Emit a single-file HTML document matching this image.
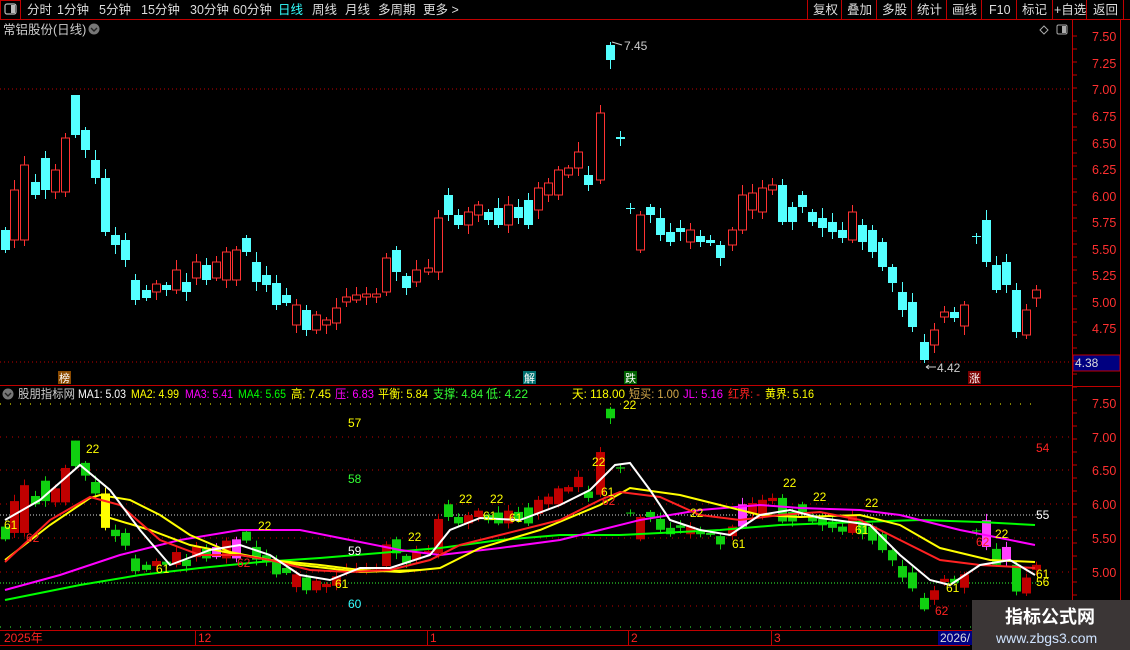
<!DOCTYPE html>
<html><head><meta charset="utf-8">
<style>
body{margin:0;background:#000;width:1130px;height:650px;overflow:hidden;font-family:"Liberation Sans","Noto Sans CJK SC",sans-serif}
svg{position:absolute;left:0;top:0}
</style></head><body>
<svg id="s" width="1130" height="650" xmlns="http://www.w3.org/2000/svg" font-family="Liberation Sans, Noto Sans CJK SC, sans-serif">
<rect x="0" y="0" width="1130" height="19" fill="#000"/>
<line x1="0" y1="19.5" x2="1130" y2="19.5" stroke="#c00000"/>
<rect x="0.5" y="0.5" width="20" height="19" fill="none" stroke="#c00000"/>
<rect x="5" y="4" width="11" height="10" rx="2" fill="none" stroke="#bbb" stroke-width="1.2"/>
<rect x="11" y="5" width="4" height="8" fill="#bbb"/>
<g font-size="12.5" fill="#ddd">
<text x="27" y="14">分时</text><text x="57" y="14">1分钟</text><text x="99" y="14">5分钟</text><text x="141" y="14">15分钟</text><text x="190" y="14">30分钟</text><text x="233" y="14">60分钟</text>
<text x="278" y="14" fill="#3ff">日线</text><text x="312" y="14">周线</text><text x="345" y="14">月线</text><text x="378" y="14">多周期</text><text x="423" y="14">更多 &gt;</text>
<text x="813" y="14">复权</text><text x="847" y="14">叠加</text><text x="882" y="14">多股</text><text x="917" y="14">统计</text><text x="952" y="14">画线</text><text x="989" y="14">F10</text><text x="1022" y="14">标记</text><text x="1054" y="14">+自选</text><text x="1093" y="14">返回</text>
</g>
<g stroke="#c00000"><line x1="807.5" y1="0" x2="807.5" y2="19"/><line x1="841.5" y1="0" x2="841.5" y2="19"/><line x1="876.5" y1="0" x2="876.5" y2="19"/><line x1="911.5" y1="0" x2="911.5" y2="19"/><line x1="946.5" y1="0" x2="946.5" y2="19"/><line x1="981.5" y1="0" x2="981.5" y2="19"/><line x1="1016.5" y1="0" x2="1016.5" y2="19"/><line x1="1052.5" y1="0" x2="1052.5" y2="19"/><line x1="1086.5" y1="0" x2="1086.5" y2="19"/><line x1="1123.5" y1="0" x2="1123.5" y2="19"/></g>
<text x="3" y="34" font-size="12.5" fill="#ccc">常铝股份(日线)</text>
<circle cx="94" cy="29" r="5.5" fill="#777"/><path d="M91 28l3 3 3-3" stroke="#222" stroke-width="1.4" fill="none"/>
<path d="M1044 26l4 4-4 4-4-4z" fill="none" stroke="#aaa"/>
<rect x="1057" y="25" width="10" height="9" rx="1.5" fill="none" stroke="#aaa"/><rect x="1062" y="26" width="4" height="7" fill="#aaa"/>
<line x1="1072.5" y1="19" x2="1072.5" y2="630" stroke="#c00000"/>
<line x1="1120.5" y1="19" x2="1120.5" y2="650" stroke="#c00000"/>
<line x1="0" y1="385.5" x2="1072" y2="385.5" stroke="#c00000"/>
<line x1="1072" y1="386.5" x2="1120" y2="386.5" stroke="#c00000"/>
<line x1="0" y1="630.5" x2="1120" y2="630.5" stroke="#c00000"/>
<line x1="0" y1="645.5" x2="970" y2="645.5" stroke="#c00000"/>
<g font-size="12.5" fill="#ff3030">
<text x="1092" y="41">7.50</text><text x="1092" y="68">7.25</text><text x="1092" y="94">7.00</text><text x="1092" y="121">6.75</text><text x="1092" y="148">6.50</text><text x="1092" y="174">6.25</text><text x="1092" y="201">6.00</text><text x="1092" y="227">5.75</text><text x="1092" y="254">5.50</text><text x="1092" y="280">5.25</text><text x="1092" y="307">5.00</text><text x="1092" y="333">4.75</text>
<text x="1092" y="408">7.50</text><text x="1092" y="442">7.00</text><text x="1092" y="475">6.50</text><text x="1092" y="509">6.00</text><text x="1092" y="543">5.50</text><text x="1092" y="577">5.00</text>
</g>
<rect x="1073" y="355" width="47" height="16" fill="#000080" stroke="#c00000"/>
<text x="1075" y="367" font-size="12" fill="#ddd">4.38</text>
<g id="ticks" stroke="#c00000"></g>
<line x1="0" y1="89" x2="1072" y2="89" stroke="#c00000" stroke-dasharray="1 3"/>
<line x1="0" y1="362" x2="1072" y2="362" stroke="#c00000" stroke-dasharray="1 3"/>
<g stroke="#c00000" stroke-dasharray="1 5">
<line x1="0" y1="437" x2="1072" y2="437"/><line x1="0" y1="470" x2="1072" y2="470"/><line x1="0" y1="504" x2="1072" y2="504"/><line x1="0" y1="538" x2="1072" y2="538"/><line x1="0" y1="572" x2="1072" y2="572"/><line x1="0" y1="606" x2="1072" y2="606"/>
</g>
<line x1="0" y1="404" x2="1040" y2="404" stroke="#ff0" stroke-dasharray="1 9"/>
<line x1="0" y1="515" x2="1040" y2="515" stroke="#ddd" stroke-dasharray="1 2"/>
<line x1="0" y1="583" x2="1040" y2="583" stroke="#3f3" stroke-dasharray="1 2"/>
<line x1="0" y1="627" x2="1040" y2="627" stroke="#3f3" stroke-dasharray="1 9"/>
<circle cx="8" cy="394" r="5.5" fill="#777"/><path d="M5 393l3 3 3-3" stroke="#222" stroke-width="1.4" fill="none"/>
<g font-size="12">
<text x="18" y="398" fill="#ccc" textLength="57" lengthAdjust="spacingAndGlyphs">股朋指标网</text>
<text x="78" y="398" fill="#fff" textLength="48" lengthAdjust="spacingAndGlyphs">MA1: 5.03</text>
<text x="131" y="398" fill="#ff0" textLength="48" lengthAdjust="spacingAndGlyphs">MA2: 4.99</text>
<text x="185" y="398" fill="#f0f" textLength="48" lengthAdjust="spacingAndGlyphs">MA3: 5.41</text>
<text x="238" y="398" fill="#0f0" textLength="48" lengthAdjust="spacingAndGlyphs">MA4: 5.65</text>
<text x="291" y="398" fill="#ff0" textLength="40" lengthAdjust="spacingAndGlyphs">高: 7.45</text>
<text x="335" y="398" fill="#f0f" textLength="39" lengthAdjust="spacingAndGlyphs">压: 6.83</text>
<text x="378" y="398" fill="#ff0" textLength="50" lengthAdjust="spacingAndGlyphs">平衡: 5.84</text>
<text x="433" y="398" fill="#3f3" textLength="50" lengthAdjust="spacingAndGlyphs">支撑: 4.84</text>
<text x="486" y="398" fill="#3f3">低: 4.22</text>
<text x="572" y="398" fill="#ff0" textLength="53" lengthAdjust="spacingAndGlyphs">天: 118.00</text>
<text x="629" y="398" fill="#d4a84a" textLength="50" lengthAdjust="spacingAndGlyphs">短买: 1.00</text>
<text x="683" y="398" fill="#f0f" textLength="40" lengthAdjust="spacingAndGlyphs">JL: 5.16</text>
<text x="728" y="398" fill="#f22" textLength="32" lengthAdjust="spacingAndGlyphs">红界: -</text>
<text x="765" y="398" fill="#ff0" textLength="49" lengthAdjust="spacingAndGlyphs">黄界: 5.16</text>
</g>
<g id="c"></g>
<g fill="none" stroke-width="2">
<polyline stroke="#0f0" points="5,600 80,585 140,575 200,568 260,562 320,558 380,553 440,548 500,540 560,535 620,535 660,533 720,530 780,525 860,522 920,520 980,522 1035,525"/>
<polyline stroke="#f0f" points="5,590 60,575 120,555 180,540 240,530 300,530 350,540 400,550 440,555 500,548 560,540 600,530 640,520 700,510 760,505 800,508 860,510 900,515 960,530 1035,545"/>
<polyline stroke="#ff0" points="5,560 50,525 90,498 100,495 130,500 160,515 190,535 230,552 270,560 320,565 360,570 400,572 440,568 480,548 540,530 600,505 630,488 680,495 720,505 760,515 800,517 860,515 900,525 940,548 990,560 1035,562"/>
<polyline stroke="#ff0" points="100,515 150,530 190,545 240,555 300,565 360,572 420,570"/>
<polyline stroke="#f22" points="5,562 50,520 90,497 120,505 160,540 200,555 240,555 270,560 310,570 350,572 390,570 430,560 460,545 500,535 560,520 600,500 620,492 660,497 700,515 740,520 780,515 820,512 860,520 900,540 940,560 980,565 1035,568"/>
<polyline stroke="#fff" points="5,520 40,500 80,465 110,490 140,530 170,565 210,550 240,545 270,555 300,575 330,580 360,568 390,568 430,555 450,530 480,518 520,520 560,505 590,490 615,465 630,463 650,490 670,520 700,530 730,535 760,515 790,510 820,518 850,522 870,525 900,555 930,580 950,585 980,565 1010,560 1035,575"/>
</g>
<g font-size="12">
<text x="348" y="427" fill="#ff0">57</text><text x="348" y="483" fill="#3f3">58</text><text x="348" y="555" fill="#fff">59</text><text x="348" y="608" fill="#3ff">60</text>
<text x="1036" y="452" fill="#f22">54</text><text x="1036" y="519" fill="#fff">55</text><text x="1036" y="578" fill="#ff0">61</text><text x="1036" y="586" fill="#ff0">56</text>
<g fill="#ff0"><text x="86" y="453">22</text><text x="258" y="530">22</text><text x="408" y="541">22</text><text x="459" y="503">22</text><text x="490" y="503">22</text><text x="592" y="466">22</text><text x="623" y="409">22</text><text x="690" y="517">22</text><text x="783" y="487">22</text><text x="813" y="501">22</text><text x="865" y="507">22</text><text x="995" y="538">22</text>
<text x="4" y="529">61</text><text x="156" y="573">61</text><text x="335" y="588">61</text><text x="483" y="520">61</text><text x="732" y="548">61</text><text x="855" y="534">61</text><text x="946" y="592">61</text><text x="601" y="496">61</text><text x="509" y="522">61</text></g>
<g fill="#f22"><text x="26" y="542">62</text><text x="237" y="567">62</text><text x="602" y="505">62</text><text x="935" y="615">62</text><text x="976" y="546">62</text></g>
</g>
<text x="624" y="50" font-size="12" fill="#ccc">7.45</text><path d="M612 42l10 3" stroke="#ccc"/>
<text x="937" y="372" font-size="12" fill="#ccc">4.42</text><path d="M926 367h10M926 367l3-2M926 367l3 2" stroke="#ccc"/>
<rect x="58" y="371" width="13" height="13" fill="#8a4a00"/><text x="59" y="382" font-size="11" fill="#fff">榜</text>
<rect x="523" y="371" width="13" height="13" fill="#007070"/><text x="524" y="382" font-size="11" fill="#fff">解</text>
<rect x="624" y="371" width="13" height="13" fill="#006000"/><text x="625" y="382" font-size="11" fill="#fff">跌</text>
<rect x="968" y="371" width="13" height="13" fill="#7a0000"/><text x="969" y="382" font-size="11" fill="#fff">涨</text>
<g font-size="12" fill="#f22"><text x="4" y="642">2025年</text><text x="198" y="642">12</text><text x="430" y="642">1</text><text x="631" y="642">2</text><text x="774" y="642">3</text></g>
<g stroke="#c00000"><line x1="195.5" y1="630" x2="195.5" y2="645"/><line x1="427.5" y1="630" x2="427.5" y2="645"/><line x1="628.5" y1="630" x2="628.5" y2="645"/><line x1="771.5" y1="630" x2="771.5" y2="645"/></g>
<rect x="938" y="631" width="40" height="14" fill="#000080"/><text x="940" y="642" font-size="12" fill="#ddd">2026/</text>
<rect x="972" y="600" width="158" height="50" fill="#3b3636"/>
<text x="1005" y="623" font-size="18" font-weight="bold" fill="#fff">指标公式网</text>
<text x="996" y="643" font-size="14" fill="#cfe3ff">www.zbgs3.com</text>
</svg>
<script>
var C=[[5,230,250,0],[14,190,240,1],[24,165,240,1],[35,182,195,0],[45,158,190,0],[55,170,192,1],[65,138,192,1],[75,95,135,0,95],[85,130,150,0],[95,160,178,0],[105,178,232,0],[115,235,245,0],[125,240,260,0],[135,280,300,0],[146,290,298,0],[156,284,292,1],[166,285,290,0],[176,270,290,1],[186,282,292,0],[196,262,278,1],[206,265,280,0],[216,262,278,1],[226,252,280,1],[236,250,280,1],[246,238,252,0],[256,262,282,0],[266,275,285,0],[276,283,305,0],[286,295,303,0],[296,305,325,1],[306,310,330,0],[316,315,330,1],[326,320,325,1],[336,308,323,1],[346,297,302,1],[356,295,300,1],[366,294,297,1],[376,294,297,1],[386,258,292,1],[396,250,272,0],[406,276,288,0],[416,270,282,1],[428,268,272,1],[438,218,272,1],[448,195,215,0],[458,215,225,0],[468,212,225,1],[478,205,215,1],[488,212,220,0],[498,208,225,0],[508,205,225,1],[518,207,218,0],[528,200,225,0],[538,188,210,1],[548,183,195,1],[558,170,195,1],[568,168,175,1],[578,152,168,1],[588,175,185,0],[600,113,180,1],[610,45,60,0,42],[620,137,139,0],[630,208,209,0],[640,215,250,1],[650,207,215,0],[660,218,235,0],[670,232,242,0],[680,228,232,0],[690,230,242,1],[700,236,242,0],[710,240,243,0],[720,245,258,0],[732,230,245,1],[742,195,230,1],[752,193,210,1],[762,188,212,1],[772,185,190,1],[782,185,222,0],[792,207,222,0],[802,195,207,0],[812,212,222,0],[822,218,228,0],[832,222,232,0],[842,230,238,0],[852,212,240,1],[862,225,242,0],[872,230,252,0],[882,242,267,0],[892,267,283,0],[902,292,310,0],[912,302,327,0],[924,342,360,0],[934,330,345,1],[944,312,317,1],[954,312,318,0],[964,305,326,1],[976,236,237,0],[986,220,262,0],[996,265,290,0],[1006,262,285,0],[1016,290,332,0],[1026,310,335,1],[1036,290,298,1]];
var h='';
function m(y){return 403+(y-36)*0.637;}
C.forEach(function(c,i){var x=c[0],t=c[1],b=c[2],up=c[3];var hi=c[4]||t-3-(i*7%8),lo=b+3+(i*5%7);
var col=up?'#ff3232':'#54ffff';
h+='<line x1="'+(x+.5)+'" y1="'+hi+'" x2="'+(x+.5)+'" y2="'+lo+'" stroke="'+col+'"/>';
if(up)h+='<rect x="'+(x-3.5)+'" y="'+t+'" width="8" height="'+Math.max(b-t,1)+'" fill="#000" stroke="'+col+'"/>';
else h+='<rect x="'+(x-4)+'" y="'+t+'" width="9" height="'+Math.max(b-t,1)+'" fill="'+col+'"/>';
var c2=up?'#c00000':'#10d010';
if([105].indexOf(x)>=0)c2='#ffff00';
if([216,236,742,986,1006].indexOf(x)>=0)c2='#ff40ff';
h+='<line x1="'+(x+.5)+'" y1="'+m(hi)+'" x2="'+(x+.5)+'" y2="'+m(lo)+'" stroke="'+c2+'"/>';
h+='<rect x="'+(x-4)+'" y="'+m(t)+'" width="9" height="'+Math.max((b-t)*0.637,1)+'" fill="'+c2+'"/>';
});
document.getElementById('c').innerHTML=h;
var t='';for(var y=36;y<630;y+=13)t+='<line x1="1072" y1="'+y+'" x2="1077" y2="'+y+'"/>';
document.getElementById('ticks').innerHTML=t;
</script>
</body></html>
